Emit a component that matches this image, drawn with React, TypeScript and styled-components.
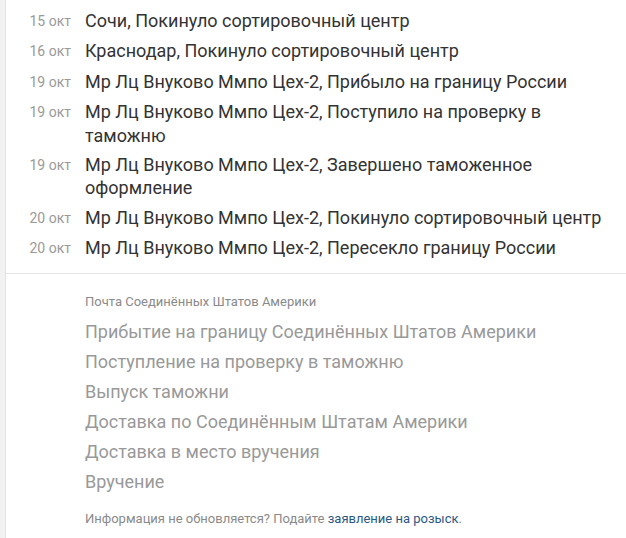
import React from "react";
import styled, { createGlobalStyle } from "styled-components";

const Global = createGlobalStyle`
  html, body { margin: 0; padding: 0; background: #f4f4f4; }
  body { font-family: Roboto, "Noto Sans", Arial, sans-serif; }
`;

const Page = styled.div`
  display: flex;
  min-height: 538px;
`;

const Strip = styled.div`
  width: 5px;
  flex: none;
  background: #f2f2f2;
  border-right: 1px solid #e3e3e3;
`;

const Card = styled.div`
  flex: 1;
  background: #fff;
  display: flex;
  flex-direction: column;
`;

const History = styled.div`
  padding: 6px 16px 9px 0;
  display: flex;
  flex-direction: column;
`;

const Row = styled.div`
  display: grid;
  grid-template-columns: 65px 1fr;
  column-gap: 14px;
  padding: 3px 0;
  align-items: start;
`;

const DateCell = styled.span`
  text-align: right;
  font-size: 14px;
  color: #9a9a9a;
  line-height: 23.4px;
  padding-top: 1px;
`;

const Event = styled.span`
  font-size: 18px;
  line-height: 23.4px;
  color: #333;
`;

const Divider = styled.div`
  height: 1px;
  background: #e6e6e6;
`;

const Future = styled.div`
  padding: 18px 16px 0 79px;
  display: flex;
  flex-direction: column;
`;

const Carrier = styled.div`
  font-size: 13px;
  line-height: 20px;
  color: #8a8a8a;
  margin-bottom: 5px;
`;

const Step = styled.div`
  font-size: 18px;
  line-height: 24px;
  padding: 3px 0;
  color: #999;
`;

const Note = styled.div`
  margin-top: 12px;
  font-size: 13px;
  line-height: 20px;
  color: #8a8a8a;
`;

const Link = styled.a`
  color: #2a5885;
  text-decoration: none;
`;

const events: [string, string][] = [
  ["15 окт", "Сочи, Покинуло сортировочный центр"],
  ["16 окт", "Краснодар, Покинуло сортировочный центр"],
  ["19 окт", "Мр Лц Внуково Ммпо Цех-2, Прибыло на границу России"],
  ["19 окт", "Мр Лц Внуково Ммпо Цех-2, Поступило на проверку в таможню"],
  ["19 окт", "Мр Лц Внуково Ммпо Цех-2, Завершено таможенное оформление"],
  ["20 окт", "Мр Лц Внуково Ммпо Цех-2, Покинуло сортировочный центр"],
  ["20 окт", "Мр Лц Внуково Ммпо Цех-2, Пересекло границу России"],
];

const steps = [
  "Прибытие на границу Соединённых Штатов Америки",
  "Поступление на проверку в таможню",
  "Выпуск таможни",
  "Доставка по Соединённым Штатам Америки",
  "Доставка в место вручения",
  "Вручение",
];

export default function App() {
  return (
    <>
      <Global />
      <Page>
        <Strip />
        <Card>
          <History>
            {events.map(([d, t], i) => (
              <Row key={i}>
                <DateCell>{d}</DateCell>
                <Event>{t}</Event>
              </Row>
            ))}
          </History>
          <Divider />
          <Future>
            <Carrier>Почта Соединённых Штатов Америки</Carrier>
            {steps.map((s) => (
              <Step key={s}>{s}</Step>
            ))}
            <Note>
              Информация не обновляется? Подайте <Link href="#">заявление на розыск</Link>.
            </Note>
          </Future>
        </Card>
      </Page>
    </>
  );
}
